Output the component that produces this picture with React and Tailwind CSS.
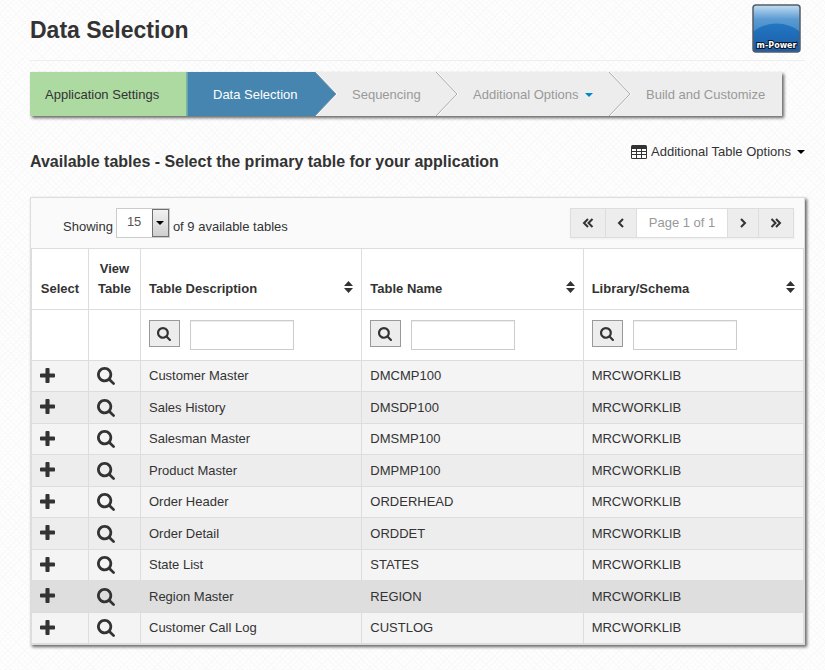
const tables = [
  { description: "Customer Master", name: "DMCMP100", library: "MRCWORKLIB" },
  { description: "Sales History", name: "DMSDP100", library: "MRCWORKLIB" },
  { description: "Salesman Master", name: "DMSMP100", library: "MRCWORKLIB" },
  { description: "Product Master", name: "DMPMP100", library: "MRCWORKLIB" },
  { description: "Order Header", name: "ORDERHEAD", library: "MRCWORKLIB" },
  { description: "Order Detail", name: "ORDDET", library: "MRCWORKLIB" },
  { description: "State List", name: "STATES", library: "MRCWORKLIB" },
  { description: "Region Master", name: "REGION", library: "MRCWORKLIB", active: true },
  { description: "Customer Call Log", name: "CUSTLOG", library: "MRCWORKLIB" },
];

const columns = ["Table Description", "Table Name", "Library/Schema"];

const SearchIcon = ({ className }) => (
  <svg viewBox="64 128 1664 1664" className={className} fill="currentColor" aria-hidden="true">
    <path d="M1216 832q0-185-131.5-316.5t-316.5-131.5-316.5 131.5-131.5 316.5 131.5 316.5 316.5 131.5 316.5-131.5 131.5-316.5zm512 832q0 52-38 90t-90 38q-54 0-90-38l-343-342q-179 124-399 124-143 0-273.5-55.5t-225-150-150-225-55.5-273.5 55.5-273.5 150-225 225-150 273.5-55.5 273.5 55.5 225 150 150 225 55.5 273.5q0 220-124 399l343 343q37 37 37 90z" />
  </svg>
);

const PlusIcon = () => (
  <svg viewBox="192 128 1408 1408" className="block size-[15px]" fill="currentColor" aria-hidden="true">
    <path d="M1600 736v192q0 40-28 68t-68 28h-416v416q0 40-28 68t-68 28h-192q-40 0-68-28t-28-68v-416h-416q-40 0-68-28t-28-68v-192q0-40 28-68t68-28h416v-416q0-40 28-68t68-28h192q40 0 68 28t28 68v416h416q40 0 68 28t28 68z" />
  </svg>
);

const TableIcon = () => (
  <svg viewBox="0 0 16 14" className="h-[14px] w-4" aria-hidden="true">
    <rect x="0" y="0" width="16" height="14" rx="1.5" fill="#333" />
    <path
      d="M1 4h4v2H1zM6 4h4v2H6zM11 4h4v2h-4zM1 7h4v2H1zM6 7h4v2H6zM11 7h4v2h-4zM1 10h4v3H1zM6 10h4v3H6zM11 10h4v3h-4z"
      fill="#fff"
    />
  </svg>
);

const SortIcon = () => (
  <svg viewBox="0 0 9 12" className="h-3 w-[9px]" fill="#333" aria-hidden="true">
    <path d="M4.5 0L9 5H0zM0 7h9L4.5 12z" />
  </svg>
);

const Caret = ({ className = "" }) => (
  <svg viewBox="0 0 8 4" className={`h-1 w-2 ${className}`} fill="currentColor" aria-hidden="true">
    <path d="M0 0h8L4 4z" />
  </svg>
);

const Angle = ({ double, flip }) => (
  <svg
    viewBox="0 0 12 10"
    className={`h-[10px] w-3 ${flip ? "-scale-x-100" : ""}`}
    fill="none"
    stroke="#333"
    strokeWidth="2"
    aria-hidden="true"
  >
    <path d={double ? "M6 1L2 5L6 9M10.5 1L6.5 5L10.5 9" : "M8 1L4 5L8 9"} />
  </svg>
);

const Logo = () => (
  <svg viewBox="0 0 49 49" className="size-[49px]" role="img" aria-label="m-Power">
    <defs>
      <linearGradient id="sky" x1="0" y1="0" x2="0" y2="1">
        <stop offset="0" stopColor="#c4def2" />
        <stop offset="0.3" stopColor="#5b9bd3" />
        <stop offset="0.55" stopColor="#468bc8" />
      </linearGradient>
      <linearGradient id="hill" x1="0" y1="0" x2="0" y2="1">
        <stop offset="0" stopColor="#2277c2" />
        <stop offset="1" stopColor="#1c5ca8" />
      </linearGradient>
    </defs>
    <rect x="1" y="1" width="47" height="47" rx="3" fill="url(#sky)" />
    <path d="M1 28C14 16.500 35 16.500 48 28V45Q48 48 45 48H4Q1 48 1 45z" fill="url(#hill)" />
    <rect x="1" y="1" width="47" height="47" rx="3" fill="none" stroke="#565c64" strokeWidth="1.5" />
    <text
      x="24.5"
      y="44"
      textAnchor="middle"
      fontFamily="DejaVu Sans, sans-serif"
      fontWeight="bold"
      fontSize="8"
      fill="#fff"
      stroke="#0a1626"
      strokeWidth="2"
      paintOrder="stroke"
    >
      m-Power
    </text>
  </svg>
);

const StepArrow = ({ active }) => (
  <svg viewBox="0 0 22 44" className="h-11 w-[22px] shrink-0" fill="none" aria-hidden="true">
    {active && <path d="M0 0L21 22L0 44z" fill="#4585b0" />}
    <path d="M1 0L22 22L1 44" stroke="#fff" />
    <path d="M0 0L21 22L0 44" stroke={active ? "#7b96a8" : "#aaa"} />
  </svg>
);

const Steps = () => {
  const step = "flex h-11 items-center pt-px";
  return (
    <nav
      aria-label="Steps"
      className="mt-[11px] inline-flex h-11 items-center bg-[#ededed] text-[#999] shadow-[2px_2px_3px_#666]"
    >
      <a href="#settings" className={`${step} w-[157px] border-r border-[#86b87c] bg-[#addaa1] pl-[15px] text-[#333]`}>
        Application Settings
      </a>
      <a href="#selection" className={`${step} w-32 border-l border-[#5aa5d6] bg-[#4585b0] pl-[25px] text-white`}>
        Data Selection
      </a>
      <StepArrow active />
      <a href="#sequencing" className={`${step} w-[99px] pl-[15px]`}>
        Sequencing
      </a>
      <StepArrow />
      <a href="#options" className={`${step} w-[151px] gap-1.5 pl-[15px]`}>
        Additional Options
        <Caret className="text-[#0088cc]" />
      </a>
      <StepArrow />
      <a href="#build" className={`${step} w-[151px] pl-[15px]`}>
        Build and Customize
      </a>
    </nav>
  );
};

const Pager = () => {
  const button = "flex h-7 items-center justify-center border-[#ddd] bg-[#ededed]";
  return (
    <div className="flex h-[30px] border border-[#ddd] shadow-[0_1px_2px_rgba(0,0,0,0.05)]">
      <button type="button" aria-label="First page" className={`${button} w-[35px] border-r`}>
        <Angle double />
      </button>
      <button type="button" aria-label="Previous page" className={`${button} w-[31px] border-r`}>
        <Angle />
      </button>
      <span className="w-[90px] bg-white text-center leading-[27px] text-[#999]">Page 1 of 1</span>
      <button type="button" aria-label="Next page" className={`${button} w-[31px] border-l`}>
        <Angle flip />
      </button>
      <button type="button" aria-label="Last page" className={`${button} w-[35px] border-l`}>
        <Angle double flip />
      </button>
    </div>
  );
};

const PageSize = () => (
  <div className="flex items-center gap-[3px] pl-8">
    <label htmlFor="page-size" className="pt-2">Showing</label>
    <div className="grid h-[30px] w-[54px] border border-[#ccc] bg-white">
      <select
        id="page-size"
        defaultValue="15"
        className="col-start-1 row-start-1 appearance-none bg-transparent pb-0.5 pl-2.5 text-[#555] outline-none"
      >
        <option>15</option>
        <option>30</option>
        <option>50</option>
      </select>
      <span className="pointer-events-none col-start-1 row-start-1 flex w-[17px] items-center justify-center justify-self-end border border-[#707070] bg-linear-to-b from-[#f2f2f2] to-[#cfcfcf] text-black">
        <Caret />
      </span>
    </div>
    <span className="pt-2">of 9 available tables</span>
  </div>
);

const cell = "border-t border-l border-[#ddd] last:border-r";

const App = () => (
  <div className="min-h-screen bg-[#fefefe] bg-[repeating-linear-gradient(45deg,transparent_0_3px,#f9f9f9_3px_4px),repeating-linear-gradient(-45deg,transparent_0_3px,#f9f9f9_3px_4px)] pr-5 pb-6 pl-[30px] font-['Liberation_Sans',Arial,sans-serif] text-[13px] leading-5 text-[#333]">
    <header className="flex h-[61px] items-start justify-between border-b border-[#eee] pt-1 pr-1">
      <h1 className="pt-1.5 text-[23px] leading-10 font-bold">Data Selection</h1>
      <Logo />
    </header>

    <Steps />

    <div className="flex h-[81px] items-start justify-between pt-[26px]">
      <h2 className="pt-2.5 text-base leading-5 font-bold">
        Available tables - Select the primary table for your application
      </h2>
      <button type="button" className="flex items-center gap-1">
        <TableIcon />
        Additional Table Options
        <Caret className="ml-0.5 text-black" />
      </button>
    </div>

    <section className="border border-[#ddd] bg-[#fafafa] shadow-[2px_2px_3px_#666]">
      <div className="flex h-[50px] items-start justify-between pt-2.5 pr-2.5">
        <PageSize />
        <Pager />
      </div>

      <table className="w-full table-fixed border-separate border-spacing-0 border-b border-[#ddd] bg-white text-left">
        <colgroup>
          <col className="w-[57px]" />
          <col className="w-[52px]" />
          <col />
          <col />
          <col />
        </colgroup>
        <thead>
          <tr className="h-[61px] align-bottom">
            <th className={`${cell} pb-2.5 text-center`}>Select</th>
            <th className={`${cell} pb-2.5 text-center`}>View Table</th>
            {columns.map((column) => (
              <th key={column} className={`${cell} px-2 pb-2.5`}>
                <div className="flex items-start justify-between">
                  {column}
                  <button type="button" aria-label={`Sort by ${column}`} className="flex pt-0.5">
                    <SortIcon />
                  </button>
                </div>
              </th>
            ))}
          </tr>
          <tr className="h-[51px]">
            <td className={cell} />
            <td className={cell} />
            {columns.map((column) => (
              <td key={column} className={`${cell} px-2`}>
                <div className="flex items-start gap-2.5">
                  <button
                    type="button"
                    aria-label={`Search ${column}`}
                    className="flex h-[27px] w-[31px] items-center justify-center border border-[#999] bg-[#ededed] pr-px"
                  >
                    <SearchIcon className="size-[14px]" />
                  </button>
                  <input
                    type="text"
                    aria-label={column}
                    className="h-[30px] w-[104px] border border-[#ccc] bg-white px-1.5 shadow-[inset_0_1px_1px_rgba(0,0,0,0.075)] outline-none"
                  />
                </div>
              </td>
            ))}
          </tr>
        </thead>
        <tbody>
          {tables.map((table) => (
            <tr
              key={table.name}
              className={`h-[31px] even:h-8 ${table.active ? "bg-[#dedede]" : "bg-[#f4f4f4] even:bg-[#ededed]"}`}
            >
              <td className={`${cell} px-2 pb-0.5`}>
                <button type="button" aria-label={`Select ${table.description}`} className="block">
                  <PlusIcon />
                </button>
              </td>
              <td className={`${cell} px-2`}>
                <button type="button" aria-label={`View ${table.description}`} className="block">
                  <SearchIcon className="block size-[18px]" />
                </button>
              </td>
              <td className={`${cell} px-2`}>{table.description}</td>
              <td className={`${cell} px-2`}>{table.name}</td>
              <td className={`${cell} px-2`}>{table.library}</td>
            </tr>
          ))}
        </tbody>
      </table>
    </section>
  </div>
);

export default App;
